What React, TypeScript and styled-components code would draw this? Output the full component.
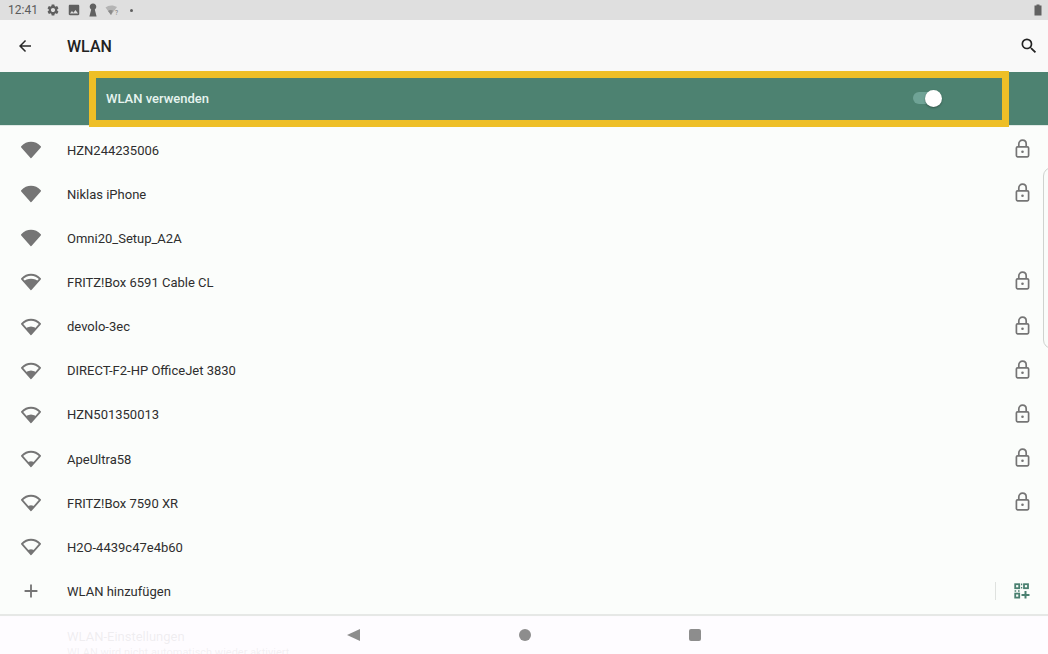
import React from 'react';
import styled, { createGlobalStyle } from 'styled-components';
import { MdAdd, MdArrowBack, MdImage, MdSearch, MdSettings } from 'react-icons/md';

const GlobalStyle = createGlobalStyle`
  html, body {
    margin: 0;
    padding: 0;
    background: #fbfdfb;
    font-family: Roboto, "Noto Sans", sans-serif;
    overflow: hidden;
  }
`;

const networks = [
  { name: 'HZN244235006', level: 4, locked: true },
  { name: 'Niklas iPhone', level: 4, locked: true },
  { name: 'Omni20_Setup_A2A', level: 4, locked: false },
  { name: 'FRITZ!Box 6591 Cable CL', level: 3, locked: true },
  { name: 'devolo-3ec', level: 2, locked: true },
  { name: 'DIRECT-F2-HP OfficeJet 3830', level: 2, locked: true },
  { name: 'HZN501350013', level: 2, locked: true },
  { name: 'ApeUltra58', level: 1, locked: true },
  { name: 'FRITZ!Box 7590 XR', level: 1, locked: true },
  { name: 'H2O-4439c47e4b60', level: 1, locked: false }
];

const radius: any = { 1: 6.5, 2: 9.5, 3: 12.5, 4: 24 };
const fan = 'M12 19 L2 7.5 C5 4.4 8.4 3 12 3 C15.6 3 19 4.4 22 7.5 Z';

const WifiIcon = ({ level }: { level: number }) => (
  <svg width="22" height="20" viewBox="0 0 24 22">
    <defs>
      <clipPath id={`wifi-${level}`}>
        <circle cx="12" cy="20" r={radius[level]} />
      </clipPath>
    </defs>
    <path d={fan} fill="none" stroke="#757575" strokeWidth="2" strokeLinejoin="round" />
    <path d={fan} fill="#757575" clipPath={`url(#wifi-${level})`} />
  </svg>
);

const LockIcon = () => (
  <svg width="15" height="19" viewBox="0 0 15 19">
    <path d="M3.8 8 V5 C3.8 2.8 5.4 1.2 7.5 1.2 C9.6 1.2 11.2 2.8 11.2 5 V8" fill="none" stroke="#757575" strokeWidth="1.7" />
    <rect x="1.4" y="7.8" width="12.2" height="10" rx="1.2" fill="none" stroke="#757575" strokeWidth="1.7" />
    <circle cx="7.5" cy="12.8" r="1.3" fill="#757575" />
  </svg>
);

const QrIcon = () => (
  <svg width="16" height="16" viewBox="0 0 16 16" fill="none" stroke="#4a8070" strokeWidth="1.8">
    <rect x="1.2" y="1.2" width="4" height="4" />
    <rect x="10" y="1.2" width="4" height="4" />
    <rect x="1.2" y="10.6" width="4" height="4" />
    <path d="M7.5 12 H15.5 M11.5 8 V15.5" strokeWidth="2" />
    <path d="M0.6 8 H2.2 M4 8 H5.6 M7.6 0.6 V2.2 M7.6 4 V5.6" strokeWidth="1.3" />
  </svg>
);

const KeyholeIcon = () => (
  <svg width="10" height="14" viewBox="0 0 10 14">
    <path d="M5 0.5 C7 0.5 8.3 2 8.3 3.8 C8.3 5 7.6 6 6.8 6.5 L8.6 13.5 H1.4 L3.2 6.5 C2.4 6 1.7 5 1.7 3.8 C1.7 2 3 0.5 5 0.5 Z" fill="#616161" />
  </svg>
);

const SmallWifiIcon = () => (
  <svg width="14" height="12" viewBox="0 0 14 12">
    <path d="M6 11 L0.5 3.5 C3.5 0.8 8.5 0.8 12 3 L9 7 L6 11 Z" fill="#b4b4b4" />
    <path d="M6 11 L3 7 C4.5 5.8 6.5 5.8 8 6.6 Z" fill="#8a8a8a" />
    <text x="10" y="11" fontSize="6.5" fill="#777" fontFamily="Roboto, sans-serif">?</text>
  </svg>
);

const BatteryIcon = () => (
  <svg width="8" height="12" viewBox="0 0 8 12">
    <path d="M2.5 0.5 H5.5 V1.5 H7.5 V11.5 H0.5 V1.5 H2.5 Z" fill="#616161" />
  </svg>
);

export default function App() {
  return (
    <Screen>
      <GlobalStyle />
      <StatusBar>
        <StatusLeft>
          <Clock>12:41</Clock>
          <MdSettings size={14} color="#5f5f5f" />
          <MdImage size={14} color="#5f5f5f" />
          <KeyholeIcon />
          <SmallWifiIcon />
          <StatusDot />
        </StatusLeft>
        <BatteryIcon />
      </StatusBar>
      <AppBar>
        <AppBarLeft>
          <MdArrowBack size={18} color="#2a2a2a" />
          <Title>WLAN</Title>
        </AppBarLeft>
        <MdSearch size={20} color="#222" />
      </AppBar>
      <SwitchBand>
        <SwitchFrame>
          <SwitchLabel>WLAN verwenden</SwitchLabel>
          <Toggle>
            <ToggleKnob />
          </Toggle>
        </SwitchFrame>
      </SwitchBand>
      <NetworkList>
        {networks.map((n, i) => (
          <Row key={`net-${i}`}>
            <IconCell><WifiIcon level={n.level} /></IconCell>
            <RowName>{n.name}</RowName>
            {n.locked && <LockCell><LockIcon /></LockCell>}
          </Row>
        ))}
        <Row>
          <IconCell><MdAdd size={22} color="#757575" /></IconCell>
          <RowName>WLAN hinzufügen</RowName>
          <QrDivider />
          <QrCell><QrIcon /></QrCell>
        </Row>
      </NetworkList>
      <Settings>
        <SettingsTitle>WLAN-Einstellungen</SettingsTitle>
        <SettingsSub>WLAN wird nicht automatisch wieder aktiviert</SettingsSub>
      </Settings>
      <EdgeHandle />
      <NavBar>
        <NavBack />
        <NavHome />
        <NavRecent />
      </NavBar>
    </Screen>
  );
}

const Screen = styled.div`
  position: relative;
  width: 1048px;
  height: 654px;
  overflow: hidden;
  background: #fbfdfb;
`;

const StatusBar = styled.div`
  height: 20px;
  background: #dfdfdf;
  display: flex;
  align-items: center;
  justify-content: space-between;
  padding: 0 6px 0 8px;
`;

const StatusLeft = styled.div`
  display: flex;
  align-items: center;
  gap: 7px;
`;

const Clock = styled.span`
  font-size: 12px;
  color: #5a5a5a;
  margin-right: 1px;
`;

const StatusDot = styled.span`
  width: 3px;
  height: 3px;
  border-radius: 50%;
  background: #5f5f5f;
  margin-left: 4px;
`;

const AppBar = styled.div`
  height: 52px;
  background: #f9f9f9;
  display: flex;
  align-items: center;
  justify-content: space-between;
  padding: 0 9px 0 16px;
`;

const AppBarLeft = styled.div`
  display: flex;
  align-items: center;
  gap: 33px;
`;

const Title = styled.div`
  font-size: 16px;
  font-weight: 500;
  color: #222;
`;

const SwitchBand = styled.div`
  display: flex;
  align-items: flex-start;
  height: 53px;
  background: #4d8271;
  padding-left: 89px;
  padding-right: 39px;
  border-bottom: 1px solid #dfe9e5;
`;

const SwitchFrame = styled.div`
  position: relative;
  flex: 1;
  box-sizing: border-box;
  height: 56px;
  margin-top: -1px;
  border: 7px solid #eebf27;
  display: flex;
  align-items: center;
  justify-content: space-between;
  padding: 0 65px 2px 10px;
`;

const SwitchLabel = styled.div`
  font-size: 13px;
  font-weight: 500;
  color: #e6f4ef;
`;

const Toggle = styled.div`
  position: relative;
  width: 24px;
  height: 12px;
  border-radius: 6px;
  background: #6fa396;
`;

const ToggleKnob = styled.div`
  position: absolute;
  right: -5px;
  top: -2.5px;
  width: 17px;
  height: 17px;
  border-radius: 50%;
  background: #fff;
  box-shadow: 0 1px 2px rgba(0, 0, 0, 0.35);
`;

const NetworkList = styled.div`
  padding-top: 2px;
  background: #fbfdfb;
  border-bottom: 3px solid #e6e8e6;
`;

const Row = styled.div`
  height: 44.15px;
  display: flex;
  align-items: center;
  padding-right: 18px;
`;

const IconCell = styled.div`
  width: 67px;
  box-sizing: border-box;
  padding-left: 20px;
  display: flex;
  align-items: center;
`;

const RowName = styled.div`
  flex: 1;
  font-size: 13px;
  color: #2e2e2e;
`;

const LockCell = styled.div`
  display: flex;
  align-items: center;
  margin-top: -3px;
`;

const QrDivider = styled.div`
  width: 1px;
  height: 18px;
  background: #dfe2df;
  margin-right: 18px;
`;

const QrCell = styled.div`
  display: flex;
  align-items: center;
`;

const Settings = styled.div`
  padding: 12px 0 0 67px;
  background: #fff;
`;

const SettingsTitle = styled.div`
  font-size: 13px;
  color: #2e2e2e;
`;

const SettingsSub = styled.div`
  font-size: 11px;
  color: #555;
  margin-top: 2px;
`;

const EdgeHandle = styled.div`
  position: absolute;
  right: -13px;
  top: 167px;
  width: 18px;
  height: 182px;
  box-sizing: border-box;
  border: 1px solid #cfd2cf;
  border-radius: 10px;
  background: #fafcfa;
`;

const NavBar = styled.div`
  position: absolute;
  left: 0;
  right: 0;
  bottom: 0;
  height: 38px;
  background: rgba(254, 252, 255, 0.93);
  display: flex;
  align-items: center;
  justify-content: center;
  gap: 158.5px;
`;

const NavBack = styled.div`
  width: 0;
  height: 0;
  border-top: 6.5px solid transparent;
  border-bottom: 6.5px solid transparent;
  border-right: 13px solid #8d8d8d;
`;

const NavHome = styled.div`
  width: 12px;
  height: 12px;
  border-radius: 50%;
  background: #8d8d8d;
`;

const NavRecent = styled.div`
  width: 12px;
  height: 12px;
  border-radius: 2px;
  background: #8d8d8d;
`;
